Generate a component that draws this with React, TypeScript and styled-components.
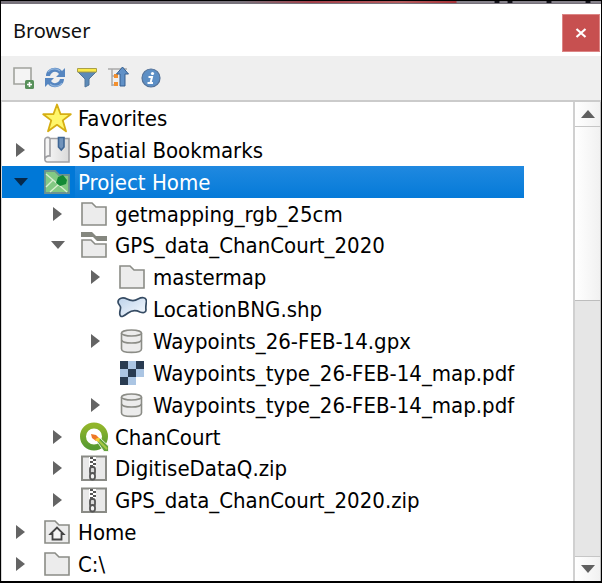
import React from 'react';
import styled, { createGlobalStyle } from 'styled-components';

const GlobalStyle = createGlobalStyle`
  *, *::before, *::after { box-sizing: border-box; }
  html, body { margin: 0; background: #fff; }
  button { margin: 0; padding: 0; border: 0; background: none; font: inherit; color: inherit; }
  svg { display: block; }
`;

const Panel = styled.main`
  display: flex;
  flex-direction: column;
  height: 100vh;
  overflow: hidden;
  border: 1px solid #000;
  border-bottom-width: 2px;
  background: #fff;
  color: #000;
  font-family: 'DejaVu Sans Condensed', 'Noto Sans', sans-serif;
`;

const TopEdge = styled.div`
  flex: none;
  height: 3px;
  border-bottom: 1px solid #77727b;
  background:
    radial-gradient(circle at 496px 1px, #101018 2px, transparent 3px),
    radial-gradient(circle at 509px 1px, #101018 2px, transparent 3px),
    radial-gradient(circle at 548px 1px, #101018 2px, transparent 3px),
    radial-gradient(circle at 587px 1px, #101018 2px, transparent 3px),
    linear-gradient(to right, #77727b 240px, #a4404a 310px, #b55d5f 400px, #a83238 455px, #85818a 456px);
`;

const TitleBar = styled.header`
  flex: none;
  display: flex;
  align-items: flex-start;
  justify-content: space-between;
  height: 52px;
  padding: 0 1px 0 12px;
`;

const Title = styled.h1`
  margin: 0;
  font: 400 20px/54px 'Noto Sans', sans-serif;
  color: #111;
`;

const CloseButton = styled.button`
  display: grid;
  place-items: center;
  width: 38px;
  height: 38px;
  margin-top: 10px;
  border: 1px solid #dc8585;
  background: #c75050;
`;

const Toolbar = styled.div`
  flex: none;
  display: flex;
  align-items: center;
  gap: 8px;
  height: 44px;
  padding-left: 10px;
  background: #efefef;
`;

const ToolButton = styled.button`
  width: 24px;
  height: 24px;
`;

const Body = styled.div`
  flex: 1;
  min-height: 0;
  display: flex;
  border-top: 2px solid #cbcbcb;
  border-left: 1px solid #d8d8d8;
`;

const Tree = styled.ul`
  flex: 1;
  min-width: 0;
  display: grid;
  grid-auto-rows: 1fr;
  margin: 0;
  padding: 0 49px 1px 0;
  list-style: none;
`;

const indents = [6, 43, 81];

const Row = styled.li<{ $level: number; $selected?: boolean }>`
  display: flex;
  align-items: center;
  min-width: 0;
  padding-left: ${p => indents[p.$level]}px;
  background: ${p => (p.$selected ? '#0078d7' : 'transparent')};
  color: ${p => (p.$selected ? '#fff' : '#000')};
`;

const Toggle = styled.button<{ $selected?: boolean }>`
  flex: none;
  display: grid;
  place-items: center;
  width: 26px;
  height: 24px;
  color: ${p => (p.$selected ? '#06294b' : '#646464')};
`;

const Spacer = styled.span`
  flex: none;
  width: 26px;
`;

const IconSlot = styled.span`
  flex: none;
  width: 30px;
  height: 30px;
  margin-left: 8px;
`;

const Label = styled.span<{ $selected?: boolean }>`
  flex: 1;
  align-self: stretch;
  display: flex;
  align-items: center;
  margin-left: 3px;
  padding: 2px 0 0 3px;
  font-size: 22px;
  line-height: 28px;
  white-space: nowrap;
  background: ${p => (p.$selected ? 'linear-gradient(#2089e0, #057ad8)' : 'none')};
`;

const ScrollBar = styled.div`
  flex: none;
  display: flex;
  flex-direction: column;
  width: 28px;
  border-left: 2px solid #d0d0d0;
  border-right: 1px solid #bbb;
  background: #e6e6e6;
`;

const ScrollButton = styled.button`
  flex: none;
  display: grid;
  place-items: center;
  height: 24px;
  background: linear-gradient(to right, #fff, #f1f1f1);
  color: #606060;
`;

const Track = styled.div`
  flex: 1;
  border-top: 1px solid #c6c6c6;
  border-bottom: 1px solid #c6c6c6;
`;

const Thumb = styled.div`
  height: calc(40% + 2px);
  border-bottom: 1px solid #bdbdbd;
  background: linear-gradient(to right, #fff, #f1f1f1);
`;

function Icon({ children, size = 30 }: { children: React.ReactNode; size?: number }) {
  return <svg width={size} height={size} viewBox={`0 0 ${size} ${size}`} aria-hidden="true">{children}</svg>;
}

const Folder = () => <path d="M3 4H13L17 8H27V26H3Z" fill="#ececec" stroke="#8b8c86" strokeWidth="1.6" />;

const StarIcon = () => (
  <Icon>
    <path d="M15 1.5L18.6 11.2H28.8L20.8 17.4L24 28.3L15 21.8L6 28.3L9.2 17.4L1.2 11.2H11.4Z" fill="#fff66a" stroke="#d6ae13" strokeWidth="1.8" strokeLinejoin="round" />
  </Icon>
);

const BookmarkIcon = () => (
  <Icon>
    <defs><linearGradient id="page"><stop stopColor="#f8f8f8" /><stop offset="1" stopColor="#dadada" /></linearGradient></defs>
    <path d="M8 3.500H27V27H5.500C3.500 27 2.800 25.500 2.800 23.500V5C2.800 2.500 6 1.500 8 3.500V21C5 20.500 3 22.500 3 24" fill="url(#page)" stroke="#a0a0a3" strokeWidth="1.600" />
    <path d="M16.500 2.500H22V12L19.250 15L16.500 12Z" fill="#7193bb" stroke="#3f6694" strokeWidth="1.600" />
  </Icon>
);

const ProjectIcon = () => (
  <Icon>
    <path d="M3 4H13L17 8H27V26H3Z" fill="#83c983" stroke="#6b9290" strokeWidth="1.800" />
    <path d="M4 7L25 25M4 20L11 13M8 25L16 18" stroke="#d8edcf" strokeWidth="1.400" fill="none" />
    <path d="M14 16L16 10L21 8L25 13L24 17L18 19Z" fill="#148a36" />
  </Icon>
);

const FolderIcon = () => <Icon><Folder /></Icon>;

const OpenFolderIcon = () => (
  <Icon>
    <path d="M2 2H13L17 6H28V11H18L14 7H2Z" fill="#85877f" />
    <path d="M3 10H12L16 14H27V27H3Z" fill="#ececec" stroke="#8b8c86" strokeWidth="1.600" />
  </Icon>
);

const ShapeIcon = () => (
  <Icon>
    <defs><linearGradient id="shape" x1="0" y1="0" x2="1" y2="1"><stop stopColor="#bcd2ea" /><stop offset="1" stopColor="#f8fbff" /></linearGradient></defs>
    <path d="M1 8C1 4 6 3 10 5C14 7 18 7 21 5C25 3 29 3 29.500 7C29 11 28.500 13 29 16C29 19 26 19 23 18C19 16 15 16 11 19C7 22 4 24 3 21C2 18 4 15 3.500 13C3 11 1 10 1 8Z" fill="url(#shape)" stroke="#354b63" strokeWidth="1.700" />
  </Icon>
);

const DatabaseIcon = () => (
  <Icon>
    <path d="M4.500 7V23C4.500 27.500 24.500 27.500 24.500 23V7" fill="#ececec" stroke="#8b8c86" strokeWidth="1.600" />
    <ellipse cx="14.500" cy="7" rx="10" ry="3" fill="#ececec" stroke="#8b8c86" strokeWidth="1.600" />
    <path d="M4.500 14C5.500 18 23.500 18 24.500 14" fill="none" stroke="#8b8c86" strokeWidth="1.600" />
  </Icon>
);

const RasterIcon = () => (
  <Icon>
    <path d="M3 3H27V19H19V27H3Z" fill="#abc5e3" />
    <path d="M3 3H11V11H3ZM19 3H27V11H19ZM11 11H19V19H11ZM3 19H11V27H3Z" fill="#293b51" />
  </Icon>
);

const ProjectFileIcon = () => (
  <Icon>
    <defs><linearGradient id="ring" x1="0" y1="0" x2="0" y2="1"><stop stopColor="#91b52b" /><stop offset="1" stopColor="#589b31" /></linearGradient></defs>
    <circle cx="15" cy="14.500" r="11" fill="#fff" stroke="url(#ring)" strokeWidth="6" />
    <path d="M17 18L21 16L29.500 24V29.500H25Z" fill="#64a33b" stroke="#fff" strokeWidth="0.800" />
    <path d="M20 19L28 27" stroke="#a6c843" strokeWidth="2" />
    <path d="M12 12L17 13L20 16L17 19L13 16Z" fill="#ee7827" />
    <path d="M16 18L20 20L21 16L18 16Z" fill="#f6ce32" />
  </Icon>
);

const ZipIcon = () => (
  <Icon>
    <path d="M3 3.500H27V27H3Z" fill="#e9e9e9" stroke="#8a8b86" strokeWidth="2" />
    <path d="M10 4H17V15H10Z" fill="#fff" />
    <path d="M11 4H14V6H11ZM14 6H17V8H14ZM11 8H14V10H11ZM14 10H17V12H14ZM11 12H14V14H11Z" fill="#555" />
    <rect x="11" y="14" width="5" height="7" rx="2" fill="#d8d8d8" stroke="#555" strokeWidth="1.800" />
    <rect x="11" y="20" width="5" height="6.500" rx="2.500" fill="#f3f3f3" stroke="#555" strokeWidth="1.800" />
  </Icon>
);

const HomeIcon = () => (
  <Icon>
    <Folder />
    <path d="M8.500 17L15 10.500L21.500 17H19.500V22.500H10.500V17Z" fill="#f4f4f4" stroke="#444" strokeWidth="1.800" />
  </Icon>
);

const tools = [
  { label: 'Add selected layers', art: <><path d="M3 2H20V18H3Z" fill="#f4f4f4" stroke="#a1a39d" strokeWidth="1.600" /><rect x="14" y="14" width="9" height="9" rx="1.500" fill="#57905a" /><path d="M18.500 16V21M16 18.500H21" stroke="#fff" strokeWidth="1.600" /></> },
  { label: 'Refresh', art: <><path d="M3 10C3 2 14-1 19 5L22 2V11H13L16 8C13 4 8 6 7 10Z" fill="#5686c0" /><path d="M21 13C21 21 10 24 5 18L2 21V12H11L8 15C11 19 16 17 17 13Z" fill="#5686c0" /><path d="M5 6C8 2 14 2 17 5M19 17C16 21 10 21 7 18" stroke="#8fb3dc" fill="none" strokeWidth="1.200" /></> },
  { label: 'Filter browser', art: <><path d="M3 6L10 13V21L14 19V13L21 6Z" fill="#5c8ab8" stroke="#50759b" /><path d="M2.500 2.500H21.500V6H2.500Z" fill="#fbea47" stroke="#aaa049" /></> },
  { label: 'Collapse all', art: <><path d="M1 3H20M5 3V20M5 10H9M5 19H9" fill="none" stroke="#aaa" strokeWidth="1.500" /><path d="M7 8H11V12H7ZM7 16H11V20H7Z" fill="#f3902e" /><path d="M15.500 1L21.500 8H18V20H13V8H9.500Z" fill="#6191c7" stroke="#365f90" /></> },
  { label: 'Properties', art: <><circle cx="12" cy="12" r="9" fill="#5d8fc5" stroke="#547298" strokeWidth="1.200" /><circle cx="13.500" cy="7.500" r="1.600" fill="#fff" /><path d="M9.500 11H13L11.500 17H14M8.500 17H12" fill="none" stroke="#fff" strokeWidth="2" /></> },
];

type Item = { name: string; level: number; icon: React.ComponentType; open?: boolean; selected?: boolean };

const items: Item[] = [
  { name: 'Favorites', level: 0, icon: StarIcon },
  { name: 'Spatial Bookmarks', level: 0, icon: BookmarkIcon, open: false },
  { name: 'Project Home', level: 0, icon: ProjectIcon, open: true, selected: true },
  { name: 'getmapping_rgb_25cm', level: 1, icon: FolderIcon, open: false },
  { name: 'GPS_data_ChanCourt_2020', level: 1, icon: OpenFolderIcon, open: true },
  { name: 'mastermap', level: 2, icon: FolderIcon, open: false },
  { name: 'LocationBNG.shp', level: 2, icon: ShapeIcon },
  { name: 'Waypoints_26-FEB-14.gpx', level: 2, icon: DatabaseIcon, open: false },
  { name: 'Waypoints_type_26-FEB-14_map.pdf', level: 2, icon: RasterIcon },
  { name: 'Waypoints_type_26-FEB-14_map.pdf', level: 2, icon: DatabaseIcon, open: false },
  { name: 'ChanCourt', level: 1, icon: ProjectFileIcon, open: false },
  { name: 'DigitiseDataQ.zip', level: 1, icon: ZipIcon, open: false },
  { name: 'GPS_data_ChanCourt_2020.zip', level: 1, icon: ZipIcon, open: false },
  { name: 'Home', level: 0, icon: HomeIcon, open: false },
  { name: 'C:\\', level: 0, icon: FolderIcon, open: false },
];

function Arrow({ direction }: { direction: 'up' | 'down' | 'right' }) {
  const path = { up: 'M1 12L8 4L15 12Z', down: 'M1 4H15L8 12Z', right: 'M3 1L12 8L3 15Z' }[direction];
  return <svg width="16" height="16" viewBox="0 0 16 16" aria-hidden="true"><path d={path} fill="currentColor" /></svg>;
}

function TreeItem({ name, level, icon: Art, open, selected }: Item) {
  return (
    <Row role="treeitem" aria-level={level + 1} aria-expanded={open} aria-selected={!!selected} $level={level} $selected={selected}>
      {open === undefined ? <Spacer /> : (
        <Toggle $selected={selected} aria-label={`${open ? 'Collapse' : 'Expand'} ${name}`}>
          <Arrow direction={open ? 'down' : 'right'} />
        </Toggle>
      )}
      <IconSlot><Art /></IconSlot>
      <Label $selected={selected}>{name}</Label>
    </Row>
  );
}

export default function App() {
  return (
    <>
      <GlobalStyle />
      <Panel>
        <TopEdge />
        <TitleBar>
          <Title>Browser</Title>
          <CloseButton aria-label="Close">
            <svg width="12" height="12" viewBox="0 0 12 12" aria-hidden="true"><path d="M1.500 2L10.500 10M10.500 2L1.500 10" stroke="#fff" strokeWidth="2.200" /></svg>
          </CloseButton>
        </TitleBar>
        <Toolbar role="toolbar" aria-label="Browser tools">
          {tools.map(t => <ToolButton key={t.label} aria-label={t.label}><Icon size={24}>{t.art}</Icon></ToolButton>)}
        </Toolbar>
        <Body>
          <Tree role="tree" aria-label="Browser">
            {items.map((item, i) => <TreeItem key={i} {...item} />)}
          </Tree>
          <ScrollBar>
            <ScrollButton aria-label="Scroll up"><Arrow direction="up" /></ScrollButton>
            <Track><Thumb /></Track>
            <ScrollButton aria-label="Scroll down"><Arrow direction="down" /></ScrollButton>
          </ScrollBar>
        </Body>
      </Panel>
    </>
  );
}
